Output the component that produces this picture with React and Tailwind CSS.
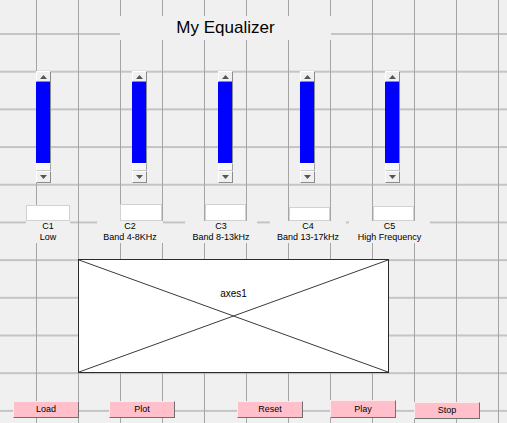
import React from "react";

// GUIDE canvas: widgets keep their place on the layout grid
const sliders = [
  "left-[36px]",
  "left-[132px]",
  "left-[218px]",
  "left-[300px]",
  "left-[385px]",
];

const channels = [
  { id: "C1", name: "Low", edit: "left-[26px] top-[205px] w-[44px] h-[16px]", label: "left-[26px] w-[44px]" },
  { id: "C2", name: "Band 4-8KHz", edit: "left-[120px] top-[204px] w-[42px] h-[17px]", label: "left-[97px] w-[66px]" },
  { id: "C3", name: "Band 8-13kHz", edit: "left-[205px] top-[204px] w-[41px] h-[17px]", label: "left-[185px] w-[72px]" },
  { id: "C4", name: "Band 13-17kHz", edit: "left-[289px] top-[207px] w-[41px] h-[14px]", label: "left-[270px] w-[76px]" },
  { id: "C5", name: "High Frequency", edit: "left-[373px] top-[206px] w-[41px] h-[15px]", label: "left-[349px] w-[81px]" },
];

const buttons = [
  { text: "Load", pos: "left-[13px] top-[401px] h-[17px]" },
  { text: "Plot", pos: "left-[109px] top-[401px] h-[17px]" },
  { text: "Reset", pos: "left-[237px] top-[401px] h-[17px]" },
  { text: "Play", pos: "left-[330px] top-[400px] h-[18px]" },
  { text: "Stop", pos: "left-[414px] top-[402px] h-[17px]" },
];

function Arrow({ down }) {
  return (
    <svg width="7" height="4" viewBox="0 0 7 4">
      <polygon points={down ? "0,0 7,0 3.5,4" : "3.5,0 7,4 0,4"} fill="#555" />
    </svg>
  );
}

function Slider({ pos }) {
  return (
    <div className={`absolute top-[71px] h-[112px] w-[15px] flex flex-col ${pos}`}>
      <div className="h-[11px] bg-[#f0f0f0] border border-t-white border-l-white border-r-[#8c8c8c] border-b-[#8c8c8c] flex items-center justify-center">
        <Arrow />
      </div>
      <div className="flex-1 bg-[#0000ff] border-r border-r-[#8c8c8c]" />
      <div className="h-[8px] bg-[#f6f6f6] border border-t-white border-l-white border-r-[#a0a0a0] border-b-[#c8c8c8]" />
      <div className="h-[12px] bg-[#f0f0f0] border border-t-white border-l-white border-r-[#8c8c8c] border-b-[#8c8c8c] flex items-center justify-center">
        <Arrow down />
      </div>
    </div>
  );
}

export default function App() {
  return (
    <div className="relative w-[507px] h-[423px] overflow-hidden bg-[#f0f0f0] bg-[image:linear-gradient(to_right,#a5a5a5_1px,transparent_1px),linear-gradient(to_bottom,#c4c4c4_2px,transparent_2px)] bg-[size:42px_37.7px] bg-[position:36px_33px] font-['Liberation_Sans',Arial,sans-serif] text-black">
      <div className="absolute left-[120px] top-[16px] w-[211px] h-[24px] bg-[#f0f0f0] flex items-center justify-center text-[17px] leading-none pb-[2px]">
        My Equalizer
      </div>

      {sliders.map((pos) => (
        <Slider key={pos} pos={pos} />
      ))}

      {channels.map((c) => (
        <React.Fragment key={c.id}>
          <div className={`absolute bg-white border border-[#d2d2d2] ${c.edit}`} />
          <div className={`absolute top-[221px] h-[22px] bg-[#f0f0f0] flex flex-col items-center text-[9px] leading-[11px] ${c.label}`}>
            <span>{c.id}</span>
            <span>{c.name}</span>
          </div>
        </React.Fragment>
      ))}

      <div className="absolute left-[78px] top-[259px] w-[311px] h-[114px] bg-white border border-[#2a2a2a]">
        <svg className="absolute inset-0 w-full h-full" viewBox="0 0 100 100" preserveAspectRatio="none">
          <line x1="0" y1="0" x2="100" y2="100" stroke="#3a3a3a" strokeWidth="1" vectorEffect="non-scaling-stroke" />
          <line x1="0" y1="100" x2="100" y2="0" stroke="#3a3a3a" strokeWidth="1" vectorEffect="non-scaling-stroke" />
        </svg>
        <div className="absolute left-0 right-0 top-[28px] text-center text-[10px] leading-[12px]">axes1</div>
      </div>

      {buttons.map((b) => (
        <div
          key={b.text}
          className={`absolute w-[66px] bg-[#ffc0cb] border border-t-[#fbe9ec] border-l-[#fbe9ec] border-r-[#6f6f6f] border-b-[#6f6f6f] flex items-center justify-center text-[9px] leading-none ${b.pos}`}
        >
          {b.text}
        </div>
      ))}
    </div>
  );
}
